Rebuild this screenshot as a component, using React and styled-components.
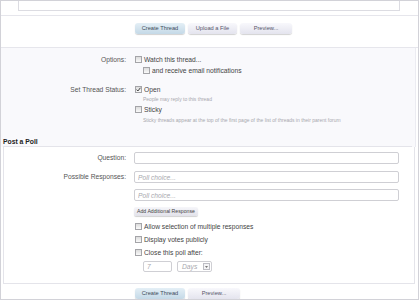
import React from 'react';
import styled, { createGlobalStyle } from 'styled-components';

const Global = createGlobalStyle`
  html, body { margin: 0; padding: 0; background: #fff; }
  body { font-family: "Liberation Sans", Arial, sans-serif; }
`;

const Frame = styled.div`
  box-sizing: border-box;
  width: 419px;
  height: 300px;
  border: 1px solid #d2d2d8;
  overflow: hidden;
  color: #444;
  font-family: "Liberation Sans", Arial, sans-serif;
`;

const EditorArea = styled.div`
  height: 14px;
  border-bottom: 1px solid #e6e6ec;
`;

const TextareaStub = styled.div`
  box-sizing: border-box;
  margin-left: 17px;
  width: 382px;
  height: 10px;
  border: 1px solid #dcdce2;
  border-top: none;
`;

const ButtonRow = styled.div`
  display: flex;
  gap: ${p => p.$gap || 3}px;
  padding: ${p => p.$top}px 0 0 134px;
  height: ${p => p.$height}px;
  box-sizing: border-box;
  border-bottom: ${p => (p.$line ? '1px solid #e6e6ec' : 'none')};
`;

const Button = styled.div`
  width: ${p => p.$w}px;
  height: 11px;
  border-radius: 3px;
  font-size: 5.7px;
  line-height: 11px;
  text-align: center;
  color: ${p => (p.$primary ? '#3d4c5a' : '#55556a')};
  background: ${p =>
    p.$primary
      ? 'linear-gradient(#e4eff6, #c4d9e7)'
      : 'linear-gradient(#f8f8fc, #e4e4ee)'};
  box-shadow: 0 1px 1px rgba(0, 0, 0, 0.18);
`;

const OptionsSection = styled.div`
  background: #f9f9fc;
  padding-top: 7px;
  margin-right: 2px;
  border-right: 1px solid #ececf2;
`;

const FieldRow = styled.div`
  display: grid;
  grid-template-columns: ${p => p.$label}px 1fr;
  column-gap: ${p => p.$gap}px;
  margin-top: ${p => p.$top || 0}px;
`;

const Label = styled.div`
  text-align: right;
  font-size: 6.7px;
  line-height: ${p => p.$lh || 9}px;
  color: #555;
  white-space: nowrap;
`;

const Stack = styled.div`
  display: flex;
  flex-direction: column;
  align-items: flex-start;
`;

const CheckItem = styled.div`
  display: flex;
  align-items: center;
  gap: 2px;
  height: 9px;
  margin-top: ${p => p.$top || 0}px;
  margin-left: ${p => p.$indent || 0}px;
  font-size: 6.7px;
  color: #444;
  white-space: nowrap;
`;

const Box = styled.span`
  box-sizing: border-box;
  width: 7px;
  height: 7px;
  border: 1px solid #a4a4a8;
  background: linear-gradient(#dcdcdc, #fafafa);
  display: flex;
  align-items: center;
  justify-content: center;
`;

const Hint = styled.div`
  font-size: 5px;
  line-height: 6px;
  color: #a8a8ae;
  margin-top: ${p => p.$top || 2}px;
  padding-left: 8px;
  white-space: nowrap;
`;

const Heading = styled.div`
  margin: 14.5px 3px 0 2px;
  height: 9px;
  line-height: 9px;
  font-size: 6.8px;
  font-weight: bold;
  color: #222;
  border-bottom: 1px solid #e4e4ea;
`;

const PollBox = styled.div`
  margin: 0 3px 0 2px;
  padding: 5px 0 11px;
  border: 1px solid #e4e4ea;
  border-top: none;
`;

const TextInput = styled.input`
  box-sizing: border-box;
  display: block;
  width: ${p => p.$w || 265}px;
  height: ${p => p.$h || 12}px;
  margin: ${p => p.$top || 0}px 0 0 ${p => p.$left || 0}px;
  padding: 0 3px;
  border: 1px solid #cfcfd4;
  border-radius: 2px;
  background: #fff;
  font-family: "Liberation Sans", Arial, sans-serif;
  font-size: 6.7px;
  outline: none;
  &::placeholder {
    color: #a8a8ae;
    font-style: italic;
  }
`;

const SmallButton = styled.div`
  margin-top: 6px;
  height: 9px;
  padding: 0 3px;
  border-radius: 2px;
  font-size: 5.2px;
  line-height: 9px;
  color: #444;
  background: linear-gradient(#f6f6fa, #e2e2ea);
  box-shadow: 0 1px 1px rgba(0, 0, 0, 0.18);
  white-space: nowrap;
`;

const Duration = styled.div`
  display: flex;
  gap: 5px;
  margin: 4px 0 0 9px;
`;

const Select = styled.div`
  box-sizing: border-box;
  width: 35px;
  height: 11px;
  border: 1px solid #cfcfd4;
  border-radius: 2px;
  display: flex;
  align-items: center;
  justify-content: space-between;
  padding: 0 1px 0 4px;
  font-size: 6.7px;
  font-style: italic;
  color: #a8a8ae;
`;

const Arrow = styled.span`
  box-sizing: border-box;
  width: 7px;
  height: 7px;
  border: 1px solid #bdbdc4;
  background: #f4f4f6;
  display: flex;
  align-items: center;
  justify-content: center;
`;

const Check = ({ checked }) => (
  <Box>
    {checked && (
      <svg width="5" height="5" viewBox="0 0 5 5">
        <path d="M0.6 2.6 L1.9 4 L4.4 0.8" fill="none" stroke="#333" strokeWidth="0.9" />
      </svg>
    )}
  </Box>
);

export default function App() {
  return (
    <>
      <Global />
      <Frame>
        <EditorArea>
          <TextareaStub />
        </EditorArea>

        <ButtonRow $top={7} $height={32} $line>
          <Button $primary $w={50}>Create Thread</Button>
          <Button $w={49}>Upload a File</Button>
          <Button $w={52}>Preview...</Button>
        </ButtonRow>

        <OptionsSection>
          <FieldRow $label={125} $gap={9}>
            <Label>Options:</Label>
            <Stack>
              <CheckItem><Check />Watch this thread...</CheckItem>
              <CheckItem $top={2} $indent={8}><Check />and receive email notifications</CheckItem>
            </Stack>
          </FieldRow>

          <FieldRow $label={125} $gap={9} $top={10}>
            <Label>Set Thread Status:</Label>
            <Stack>
              <CheckItem><Check checked />Open</CheckItem>
              <Hint>People may reply to this thread</Hint>
              <CheckItem $top={3}><Check />Sticky</CheckItem>
              <Hint $top={2.5}>
                Sticky threads appear at the top of the first page of the list of threads in their parent forum
              </Hint>
            </Stack>
          </FieldRow>

          <Heading>Post a Poll</Heading>
        </OptionsSection>

        <PollBox>
          <FieldRow $label={122} $gap={8}>
            <Label $lh={12}>Question:</Label>
            <TextInput readOnly />
          </FieldRow>

          <FieldRow $label={122} $gap={8} $top={7}>
            <Label $lh={12}>Possible Responses:</Label>
            <Stack>
              <TextInput readOnly placeholder="Poll choice..." />
              <TextInput readOnly placeholder="Poll choice..." $top={6} />
              <SmallButton>Add Additional Response</SmallButton>
              <CheckItem $top={6} $indent={1}><Check />Allow selection of multiple responses</CheckItem>
              <CheckItem $top={4} $indent={1}><Check />Display votes publicly</CheckItem>
              <CheckItem $top={4} $indent={1}><Check />Close this poll after:</CheckItem>
              <Duration>
                <TextInput readOnly placeholder="7" $w={29} $h={11} />
                <Select>
                  Days
                  <Arrow>
                    <svg width="3" height="2" viewBox="0 0 3 2">
                      <path d="M0 0 L3 0 L1.5 2 Z" fill="#777" />
                    </svg>
                  </Arrow>
                </Select>
              </Duration>
            </Stack>
          </FieldRow>
        </PollBox>

        <ButtonRow $top={4} $height={16}>
          <Button $primary $w={50}>Create Thread</Button>
          <Button $w={52}>Preview...</Button>
        </ButtonRow>
      </Frame>
    </>
  );
}
